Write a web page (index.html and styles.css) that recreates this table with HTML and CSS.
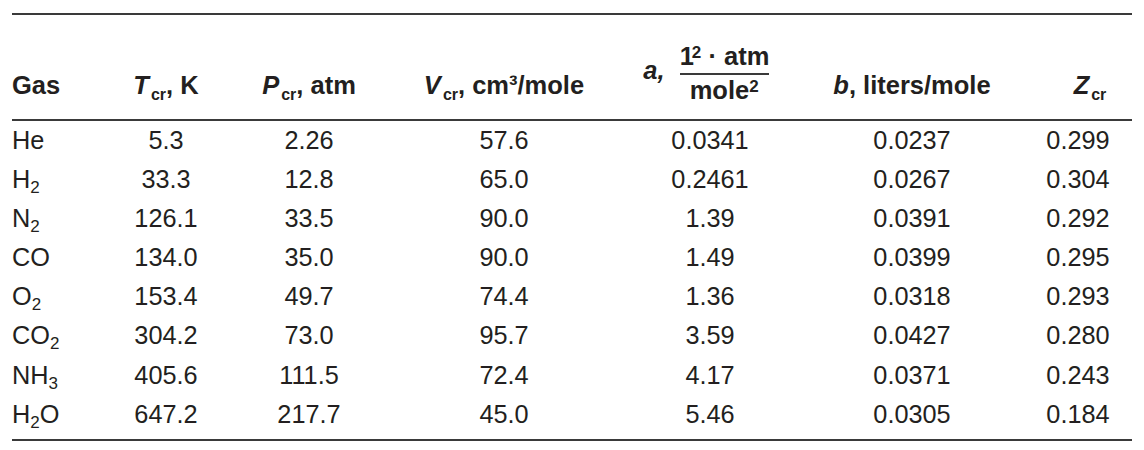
FILE: index.html
```html
<!DOCTYPE html>
<html lang="en">
<head>
<meta charset="utf-8">
<title>Critical constants of gases</title>
<link rel="stylesheet" href="styles.css">
</head>
<body>
<div class="page">
<table class="gas-table">
<colgroup>
<col class="w-gas"><col class="w-t"><col class="w-p"><col class="w-v"><col class="w-a"><col class="w-b"><col class="w-z">
</colgroup>
<thead>
<tr class="head">
<th class="c-gas">Gas</th>
<th><i>T</i><span class="hsub">cr</span>, K</th>
<th><i>P</i><span class="hsub">cr</span>, atm</th>
<th><i>V</i><span class="hsub">cr</span>, cm³/mole</th>
<th class="c-a"><span class="a-wrap"><i class="a-lbl">a,</i><span class="frac"><span class="num">1<span class="hsup tight">2</span> · atm</span><span class="bar"></span><span class="den">mole<span class="hsup">2</span></span></span></span></th>
<th><i>b</i>, liters/mole</th>
<th class="c-z"><i>Z</i><span class="hsub">cr</span></th>
</tr>
</thead>
<tbody>
<tr><td class="gas">He</td><td>5.3</td><td>2.26</td><td>57.6</td><td>0.0341</td><td>0.0237</td><td>0.299</td></tr>
<tr><td class="gas">H<span class="sub">2</span></td><td>33.3</td><td>12.8</td><td>65.0</td><td>0.2461</td><td>0.0267</td><td>0.304</td></tr>
<tr><td class="gas">N<span class="sub">2</span></td><td>126.1</td><td>33.5</td><td>90.0</td><td>1.39</td><td>0.0391</td><td>0.292</td></tr>
<tr><td class="gas">CO</td><td>134.0</td><td>35.0</td><td>90.0</td><td>1.49</td><td>0.0399</td><td>0.295</td></tr>
<tr><td class="gas">O<span class="sub">2</span></td><td>153.4</td><td>49.7</td><td>74.4</td><td>1.36</td><td>0.0318</td><td>0.293</td></tr>
<tr><td class="gas">CO<span class="sub">2</span></td><td>304.2</td><td>73.0</td><td>95.7</td><td>3.59</td><td>0.0427</td><td>0.280</td></tr>
<tr><td class="gas">NH<span class="sub">3</span></td><td>405.6</td><td>111.5</td><td>72.4</td><td>4.17</td><td>0.0371</td><td>0.243</td></tr>
<tr class="last"><td class="gas">H<span class="sub">2</span>O</td><td>647.2</td><td>217.7</td><td>45.0</td><td>5.46</td><td>0.0305</td><td>0.184</td></tr>
</tbody>
</table>
</div>
</body>
</html>
```

FILE: styles.css
```css
* { box-sizing: border-box; }
html, body { margin: 0; padding: 0; background: #ffffff; }
body {
  font-family: "Liberation Sans", Arial, Helvetica, sans-serif;
  color: #231f20;
}
.page { padding: 13px 12px 0 12px; }

.gas-table {
  width: 1120px;
  table-layout: fixed;
  border-collapse: separate;
  border-spacing: 0;
  border-top: 2px solid #3a3a3a;
  border-bottom: 2px solid #3a3a3a;
}
.w-gas { width: 98px; }
.w-t { width: 112px; }
.w-p { width: 174px; }
.w-v { width: 216px; }
.w-a { width: 196px; }
.w-b { width: 208px; }
.w-z { width: 116px; }

/* header */
.head { height: 106px; }
.head th {
  font-size: 25.5px;
  font-weight: bold;
  line-height: 30px;
  vertical-align: bottom;
  padding: 0 0 19px 0;
  border-bottom: 2px solid #3a3a3a;
  text-align: center;
  white-space: nowrap;
}
.head th.c-gas { text-align: left; }
.head th.c-a { padding-bottom: 14px; padding-right: 8px; }
.head th.c-z { padding-left: 32px; }
.hsub {
  font-size: 16px;
  vertical-align: -6px;
  line-height: 0;
  margin-left: 2px;
}
.hsup {
  font-size: 17px;
  vertical-align: 7px;
  line-height: 0;
}
.hsup.tight { margin-left: -2px; }

.a-wrap {
  display: inline-flex;
  align-items: flex-start;
  gap: 15px;
}
.a-lbl { margin-top: 14px; }
.frac {
  display: flex;
  flex-direction: column;
  align-items: stretch;
  width: 89px;
}
.num, .den { display: block; text-align: center; white-space: nowrap; }
.bar {
  display: block;
  height: 0;
  border-top: 2px solid #3a3a3a;
  margin: 2px 0 0 0;
}

/* body */
.gas-table td {
  font-size: 25.3px;
  line-height: 39.1px;
  padding: 0;
  text-align: center;
  white-space: nowrap;
}
.gas-table td.gas { text-align: left; }
.gas-table td:last-child { padding-left: 8px; }
.gas-table tr.last td { padding-bottom: 5.5px; }
.sub {
  font-size: 17px;
  vertical-align: -5px;
  line-height: 0;
}
```
